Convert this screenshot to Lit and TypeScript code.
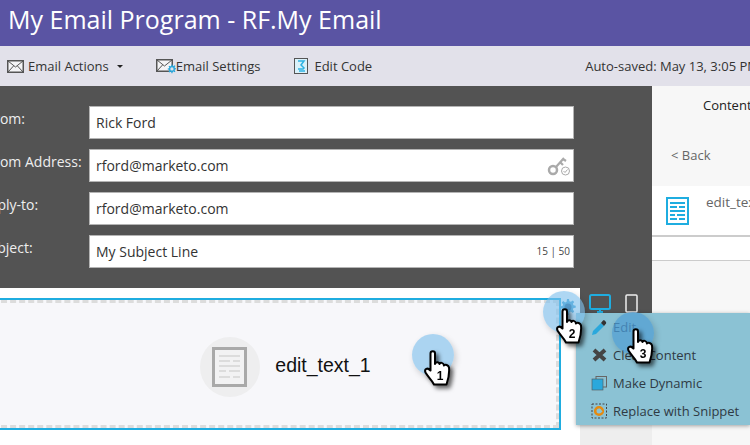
import { LitElement, html, css, svg } from "lit";
import { customElement } from "lit/decorators.js";

const envelope = html`<svg width="17" height="13" viewBox="0 0 17 13"><rect x="0.75" y="0.75" width="15.5" height="11.5" fill="#f4f4f6" stroke="#555" stroke-width="1.5"/><path d="M1 1l7.5 6L16 1M1 12l5.5-6M16 12l-5.5-6" fill="none" stroke="#555"/></svg>`;

const gearPath = "M8 0h2l.4 2.2 1.5.6L13.800 1.500l1.400 1.400-1.300 1.900.6 1.500 2.200.4v2l-2.200.4-.6 1.500 1.300 1.900-1.400 1.400-1.900-1.300-1.500.6L10 16H8l-.4-2.200-1.500-.6-1.900 1.300-1.400-1.400 1.300-1.900-.6-1.500L1.300 9.300v-2l2.200-.4.6-1.500L2.800 3.500l1.400-1.400 1.900 1.300 1.500-.6z";

function hand(n: string) {
  return html`<svg class="hand-svg" width="28" height="37" viewBox="0 0 28 37">
    <path d="M6.500 3.500C6.500.5 11 .5 11 3.500V14c.5-2.500 4-2.500 4.500 0 .5-2 4-1.500 4.500 1.500 1-1.500 4.500-.5 5 2 .5 5 0 10-2.500 17H10C8 30 4 27 1.500 22.500 0 19 3.500 17 6.500 20.500z" fill="#fff" stroke="#000" stroke-width="2" stroke-linejoin="round"/>
    <text x="16" y="29.500" text-anchor="middle" class="hand-num">${n}</text>
  </svg>`;
}

@customElement("app-root")
export class AppRoot extends LitElement {
  static styles = css`
    :host { display: block; width: 750px; height: 445px; overflow: hidden; position: relative; font-family: "Open Sans", sans-serif; background: #fff; }
    .title { height: 46px; background: #5a54a3; color: #fff; font-size: 25px; line-height: 38px; padding-left: 8px; box-sizing: border-box; white-space: nowrap; }
    .toolbar { height: 40px; background: #e2e1ea; display: flex; align-items: center; font-size: 13px; color: #333; white-space: nowrap; overflow: hidden; }
    .tool { display: flex; align-items: center; }
    .caret { width: 0; height: 0; border: 3px solid transparent; border-top: 3px solid #222; border-bottom: 0; margin-left: 4px; }
    .sep { width: 1px; height: 18px; background: #bfbfc6; }
    .t1 { margin-left: 7px; gap: 4px; }
    .s1 { margin-left: 18px; }
    .t2 { margin-left: 15px; }
    .t3 { margin-left: 34px; gap: 6px; }
    .undo { margin-left: 132px; }
    .redo { margin-left: 30px; }
    .s2 { margin-left: 16px; }
    .auto { margin-left: 35px; }
    .gear-wrap { position: relative; width: 20px; height: 16px; display: block; }

    .main { display: flex; height: 359px; }
    .left { width: 652px; display: flex; flex-direction: column; }
    .form { height: 202px; background: #535353; box-sizing: border-box; padding-top: 20px; display: flex; flex-direction: column; gap: 10px; overflow: hidden; }
    .row { display: flex; height: 33px; }
    .label { width: 89px; color: #eee; font-size: 14px; line-height: 26px; white-space: nowrap; flex: none; }
    .label span { display: block; }
    .input { width: 485px; height: 33px; box-sizing: border-box; background: #fff; border: 1px solid #b4b4b4; padding: 0 6px; font-size: 14px; line-height: 31px; color: #333; display: flex; justify-content: space-between; align-items: center; }
    .count { font-size: 10px; letter-spacing: 0; color: #444; margin-right: -3px; }
    .key { margin-right: -4px; margin-top: 1px; }

    .canvas { display: flex; flex: 1; min-height: 0; }
    .stage { width: 580px; background: #fff; box-sizing: border-box; padding: 10px 19px 15px 0; overflow: hidden; }
    .block { height: 132px; margin-left: -10px; box-sizing: border-box; border: 2px solid #1fade0; background: #f7f7fa; position: relative; display: flex; }
    .dash { flex: 1; border: 3px dashed #dcdcdc; display: flex; align-items: center; justify-content: center; box-sizing: border-box; }
    .dash-inner { display: flex; align-items: center; gap: 15px; margin-left: 30px; margin-top: 5px; color: #111; }
    .badge { width: 60px; height: 60px; border-radius: 50%; background: #eeeeef; display: flex; align-items: center; justify-content: center; }
    .name { font-family: "Liberation Sans", Arial, sans-serif; font-size: 19.500px; margin-top: -3px; margin-right: 10px; }
    .side { width: 72px; display: flex; flex-direction: column; background: #eee; }
    .devices { height: 25px; background: #535353; display: flex; gap: 14px; padding: 6px 0 0 9px; box-sizing: border-box; align-items: flex-start; }

    .right { width: 98px; background: #f7f7f7; display: flex; flex-direction: column; white-space: nowrap; overflow: hidden; font-size: 13px; }
    .tab { height: 40px; padding: 10px 0 0 51px; box-sizing: border-box; color: #222; }
    .back { height: 60px; padding: 20px 0 0 19px; box-sizing: border-box; color: #666; }
    .item { height: 51px; background: #fff; border-bottom: 2px solid #ccc; box-sizing: border-box; display: flex; padding: 11px 0 0 14px; gap: 17px; color: #666; font-size: 13.500px; }
    .item span { margin-top: -4px; }
    .sub { height: 24px; background: #fff; border-bottom: 1px solid #ccc; box-sizing: border-box; }

    .menu { position: absolute; left: 576px; top: 313px; width: 174px; height: 112px; background: #8bc2d4; box-shadow: 0 1px 4px rgba(0,0,0,.35); box-sizing: border-box; padding-top: 0; display: flex; flex-direction: column; font-size: 13px; color: #2f3a44; }
    .mi { height: 28px; display: flex; align-items: center; gap: 5px; padding-left: 15px; white-space: nowrap; }
    .mi svg { flex: none; }
    .mi-icon { width: 16px; height: 16px; flex: none; display: flex; align-items: center; justify-content: center; }
    .mi-edit { color: #3d6580; }

    .spot { position: absolute; width: 42px; height: 42px; border-radius: 50%; background: rgba(125,190,235,.62); box-shadow: 2px 3px 6px rgba(0,0,0,.18); }
    .spot.over { background: rgba(70,150,210,.6); }
    .hand { position: absolute; filter: drop-shadow(3px 3px 2px rgba(0,0,0,.6)); line-height: 0; }
    .hand-num { font-family: "Liberation Sans", Arial, sans-serif; font-size: 12px; font-weight: 700; fill: #000; }
  `;

  render() {
    const spots = [
      { sx: 412, sy: 334, hx: 424, hy: 350, n: "1", over: false },
      { sx: 543, sy: 291, hx: 556, hy: 308, n: "2", over: false },
      { sx: 612, sy: 312, hx: 627, hy: 328, n: "3", over: true },
    ];
    return html`
      <div class="title">My Email Program - RF.My Email</div>
      <div class="toolbar">
        <div class="tool t1">${envelope}<span>Email Actions</span><i class="caret"></i></div>
        <div class="sep s1"></div>
        <div class="tool t2">
          <span class="gear-wrap">
            <svg width="20" height="16" viewBox="0 0 20 16">
              <rect x="0.750" y="1.750" width="15.500" height="11.500" fill="#f4f4f6" stroke="#555" stroke-width="1.500"/>
              <path d="M1 2l7.500 6L16 2M1 13l5.500-6" fill="none" stroke="#555"/>
              <g transform="translate(11 6.500) scale(.55)"><path d="${gearPath}" fill="#2aa8dc"/><circle cx="9" cy="8" r="3" fill="#e2e1ea"/></g>
            </svg>
          </span>
          <span>Email Settings</span>
        </div>
        <div class="tool t3">
          <svg width="14" height="16" viewBox="0 0 14 16"><rect x="0.500" y="0.500" width="13" height="15" fill="#d9f1fa" stroke="#555"/><path d="M4 3h6L7 7l3 3-1 1H4m1 2h6" fill="none" stroke="#2fb3e3" stroke-width="1.500"/></svg>
          <span>Edit Code</span>
        </div>
        <svg class="undo" width="15" height="15" viewBox="0 0 15 15"><path d="M5 1L1.500 4.500 5 8M2 4.500h7a4 4 0 0 1 0 8.500H5" fill="none" stroke="#555" stroke-width="2.200"/></svg>
        <svg class="redo" width="15" height="15" viewBox="0 0 15 15"><path d="M10 1l3.500 3.500L10 8M13 4.500H6A4 4 0 0 0 6 13h4" fill="none" stroke="#aaa" stroke-width="2.200"/></svg>
        <div class="sep s2"></div>
        <span class="auto">Auto-saved: May 13, 3:05 PM</span>
      </div>
      <div class="main">
        <div class="left">
          <div class="form">
            <div class="row"><div class="label"><span style="margin-left:-13px">From:</span></div><div class="input">Rick Ford</div></div>
            <div class="row"><div class="label"><span style="margin-left:-13px">From Address:</span></div><div class="input">rford@marketo.com
              <svg class="key" width="24" height="22" viewBox="0 0 24 22"><circle cx="6" cy="15" r="4" fill="none" stroke="#aaa" stroke-width="2.500"/><path d="M9 12L17 3M13 7l3 3M16 4l3 2" fill="none" stroke="#aaa" stroke-width="2.200"/><circle cx="18.500" cy="16" r="4" fill="#fff" stroke="#aaa"/><path d="M16.500 16l1.500 1.500 2.500-3" fill="none" stroke="#aaa"/></svg>
            </div></div>
            <div class="row"><div class="label"><span style="margin-left:-19px">Reply-to:</span></div><div class="input">rford@marketo.com</div></div>
            <div class="row"><div class="label"><span style="margin-left:-19px">Subject:</span></div><div class="input">My Subject Line<span class="count">15 | 50</span></div></div>
          </div>
          <div class="canvas">
            <div class="stage">
              <div class="block">
                <div class="dash">
                  <div class="dash-inner">
                    <div class="badge">
                      <svg width="36" height="40" viewBox="0 0 36 40"><rect x="1.500" y="1.500" width="32" height="37" fill="#f2f2f3" stroke="#a9a9a9" stroke-width="3"/><path d="M7 9h21M7 14h11m3 0h7M7 19h21M7 24h7m3 0h11M7 30h11m3 0h7" stroke="#dcdcdc" stroke-width="2.200"/></svg>
                    </div>
                    <div class="name">edit_text_1</div>
                  </div>
                </div>
              </div>
            </div>
            <div class="side">
              <div class="devices">
                <svg width="22" height="20" viewBox="0 0 22 20"><rect x="1" y="1" width="20" height="14" rx="1.500" fill="none" stroke="#1fade0" stroke-width="2"/><path d="M8 18h6M11 15v3" stroke="#1fade0" stroke-width="2"/></svg>
                <svg width="13" height="19" viewBox="0 0 13 19"><rect x="1" y="1" width="11" height="17" rx="1" fill="#535353" stroke="#eee" stroke-width="1.500"/></svg>
              </div>
            </div>
          </div>
        </div>
        <div class="right">
          <div class="tab">Content</div>
          <div class="back">&lt; Back</div>
          <div class="item">
            <svg width="23" height="28" viewBox="0 0 23 28" style="flex:none"><rect x="1" y="1" width="21" height="26" fill="#fff" stroke="#1fade0" stroke-width="2"/><path d="M4 6h15M4 10h7m2 0h6M4 14h15M4 18h5m2 0h8M4 22h7m2 0h6" stroke="#1fade0" stroke-width="2"/></svg>
            <span>edit_text_1</span>
          </div>
          <div class="sub"></div>
        </div>
      </div>

      <svg style="position:absolute;left:559px;top:298px" width="18" height="18" viewBox="0 0 18 16"><path d="${gearPath}" fill="#3d9fd0"/><circle cx="9" cy="8" r="3.500" fill="#12548a"/></svg>

      <div class="menu">
        <div class="mi mi-edit">
          <svg width="17" height="17" viewBox="0 0 17 17"><path d="M2 12L10 4l3 3-8 8-4 1z" fill="#2aa8dc"/><path d="M10 4l2-2.500c1-1 4 1.500 3 3L13 7z" fill="#333"/></svg>
          <span>Edit</span>
        </div>
        <div class="mi">
          <svg width="17" height="16" viewBox="0 0 17 16"><path d="M3 3l11 10M14 3L3 13" stroke="#444" stroke-width="4"/></svg>
          <span>Clear Content</span>
        </div>
        <div class="mi">
          <svg width="17" height="16" viewBox="0 0 17 16"><rect x="5" y="1.500" width="10.500" height="10.500" fill="none" stroke="#666"/><rect x="1" y="4" width="11" height="11" fill="#2aa8dc" stroke="#555" stroke-width=".6"/></svg>
          <span>Make Dynamic</span>
        </div>
        <div class="mi">
          <svg width="17" height="16" viewBox="0 0 17 16"><rect x="1" y="1" width="14.500" height="14" fill="none" stroke="#444" stroke-dasharray="2 1.500"/><circle cx="8" cy="8" r="3.800" fill="none" stroke="#e58a10" stroke-width="2.600"/><path d="M8 6l3 3" stroke="#8bc2d4" stroke-width="1.500"/></svg>
          <span>Replace with Snippet</span>
        </div>
      </div>

      ${spots.map(
        (s) => html`
          <div class="spot ${s.over ? "over" : ""}" style="left:${s.sx}px;top:${s.sy}px"></div>
          <div class="hand" style="left:${s.hx}px;top:${s.hy}px">${hand(s.n)}</div>
        `
      )}
    `;
  }
}
